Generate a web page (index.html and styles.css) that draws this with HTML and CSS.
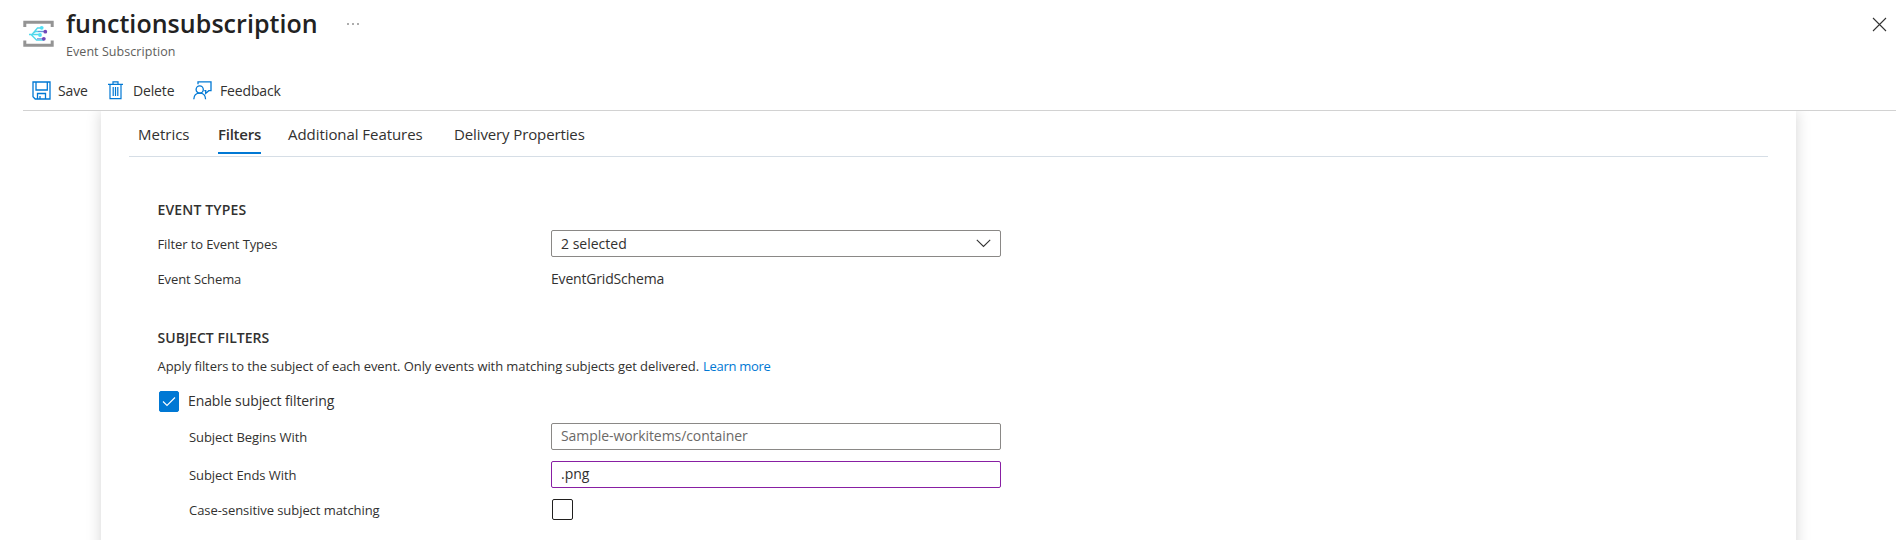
FILE: index.html
```html
<!DOCTYPE html>
<html lang="en">
<head>
<meta charset="utf-8">
<title>functionsubscription</title>
<link rel="stylesheet" href="styles.css">
</head>
<body>
<header class="header">
  <div class="title-row">
    <svg class="logo" width="31" height="28" viewBox="0 0 31 28" fill="none">
      <path d="M1.8 7V2.3H29.2V7M1.8 20.5V25.2H29.2V20.5" stroke="#949494" stroke-width="3"/>
      <path d="M6 14.5H9L14.5 8H18M8 14.5L13.5 20H21M9 14.5H16M9.5 13.5L13 11.5H21" stroke="#50d8ec" stroke-width="1.3"/>
      <path d="M15 11.5H21M14 18.7H20" stroke="#6f8fd8" stroke-width="1.1"/>
      <circle cx="18.7" cy="7.8" r="1.9" fill="#50e0f5"/><circle cx="17" cy="15" r="1.9" fill="#50e0f5"/>
      <circle cx="22.3" cy="11.7" r="1.9" fill="#7048b8"/><circle cx="20.8" cy="18.8" r="1.9" fill="#7048b8"/>
    </svg>
    <div class="titles">
      <h1 class="title">functionsubscription</h1>
      <div class="subtitle">Event Subscription</div>
    </div>
    <svg class="more" width="14" height="4" viewBox="0 0 14 4" fill="#444"><circle cx="2" cy="2" r=".8"/><circle cx="7" cy="2" r=".8"/><circle cx="12" cy="2" r=".8"/></svg>
    <svg class="close" width="15" height="15" viewBox="0 0 15 15" stroke="#333" stroke-width="1.1"><path d="M1 1L14 14M14 1L1 14"/></svg>
  </div>
  <div class="toolbar">
    <button class="command save"><svg width="19" height="19" viewBox="0 0 19 19" fill="none" stroke="#0078d4" stroke-width="1.3"><path d="M1 1H18V18H3.2L1 15.8ZM4 1V9H15.3V1M5.5 18V12.5H13.5V18M8 18V15"/></svg><span>Save</span></button>
    <button class="command delete"><svg width="15" height="19" viewBox="0 0 15 19" fill="none" stroke="#0078d4" stroke-width="1.2"><path d="M0 3.4H15M5 3.2V.8H10V3.2M2 3.4V17.6H13V3.4M5.2 6V15M7.5 6V15M9.8 6V15"/></svg><span>Delete</span></button>
    <button class="command feedback"><svg width="19" height="19" viewBox="0 0 19 19" fill="none" stroke="#0078d4" stroke-width="1.3"><circle cx="6.7" cy="8.5" r="3.6"/><path d="M.8 18.2C1 14.3 3.5 12.1 6.7 12.1S12.4 14.3 12.6 18.2M5 3.3V.8H18V9.7H15.8L12.7 12.4V9.7H11.3"/></svg><span>Feedback</span></button>
  </div>
</header>
<main class="content">
  <section class="panel">
    <nav class="tabs">
      <a class="tab metrics">Metrics</a>
      <a class="tab active">Filters</a>
      <a class="tab features">Additional Features</a>
      <a class="tab delivery">Delivery Properties</a>
    </nav>
    <div class="form">
      <h2 class="heading">EVENT TYPES</h2>
      <div class="row">
        <div class="label">Filter to Event Types</div>
        <div class="field select"><span>2 selected</span>
          <svg width="15" height="9" viewBox="0 0 15 9" fill="none" stroke="#333" stroke-width="1.1"><path d="M.8 .8L7.5 7.5L14.2 .8"/></svg></div>
      </div>
      <div class="row row-schema">
        <div class="label">Event Schema</div>
        <div class="value">EventGridSchema</div>
      </div>
      <h2 class="heading subject">SUBJECT FILTERS</h2>
      <p class="description"><span>Apply filters to the subject of each event. Only events with matching subjects get delivered.</span><a class="link">Learn more</a></p>
      <div class="enable">
        <span class="checkbox checked"><svg width="14" height="11" viewBox="0 0 14 11" fill="none" stroke="#fff" stroke-width="1.1"><path d="M1 5.5L5 9.5L13 1.5"/></svg></span>
        <span class="enable-text">Enable subject filtering</span>
      </div>
      <div class="row">
        <div class="label indented">Subject Begins With</div>
        <div class="field input"><span class="placeholder">Sample-workitems/container</span></div>
      </div>
      <div class="row row-ends">
        <div class="label indented">Subject Ends With</div>
        <div class="field input edited"><span>.png</span></div>
      </div>
      <div class="row row-case">
        <div class="label indented">Case-sensitive subject matching</div>
        <span class="checkbox"></span>
      </div>
    </div>
  </section>
</main>
</body>
</html>
```
FILE: styles.css
```css
* { box-sizing: border-box; }
body { margin: 0; height: 540px; overflow: hidden; background: #fff; color: #323130; font: 14px/20px "Open Sans", "Noto Sans", sans-serif; display: flex; flex-direction: column; }
h1, h2, p { margin: 0; font: inherit; }
span { white-space: nowrap; }
.header { flex: none; height: 111px; margin-left: 23px; border-bottom: 1px solid #d2d2d2; }
.title-row { display: flex; height: 72px; }
.logo { margin-top: 20px; }
.titles { margin-left: 12px; width: 252px; }
.title { font-size: 25px; font-weight: 600; line-height: 32px; padding-top: 7px; color: #222; white-space: nowrap; letter-spacing: .05px; }
.subtitle { font-size: 12.5px; line-height: 18px; margin-top: 4px; color: #605e5c; letter-spacing: .06px; }
.more { margin: 22px 0 0 28px; }
.close { margin: 17px 9px 0 auto; }
.toolbar { display: flex; height: 38px; padding: 0 0 0 9px; }
.command { display: flex; align-items: center; height: 37px; padding: 0; border: 0; background: none; color: #323130; font: inherit; letter-spacing: -.15px; }
.save { gap: 7px; width: 76px; }
.delete { gap: 10px; width: 85px; }
.feedback { gap: 8px; }
.content { flex: 1; overflow: hidden; padding: 0 100px 0 101px; }
.panel { height: 470px; padding: 0 28px; box-shadow: 0 0 14px rgba(0,0,0,.17); background: #fff; }
.tabs { display: flex; height: 46px; padding-left: 9px; border-bottom: 1px solid #d6dee6; font-size: 15px; }
.tab { height: 43px; padding-top: 13px; white-space: nowrap; }
.metrics { width: 80px; }
.active { width: 43px; margin-right: 27px; font-weight: 600; letter-spacing: -.25px; border-bottom: 2px solid #0078d4; }
.features { width: 166px; letter-spacing: -.06px; }
.delivery { letter-spacing: -.12px; }
.form { padding: 42px 0 0 28px; }
.heading { height: 31px; font-weight: 600; line-height: 22px; white-space: nowrap; padding-left: .5px; letter-spacing: .15px; }
.row { display: flex; align-items: center; height: 27px; }
.label { width: 394px; font-size: 13px; padding-left: .5px; letter-spacing: -.1px; }
.indented { padding-left: 32px; letter-spacing: -.06px; }
.field { display: flex; align-items: center; width: 450px; height: 27px; padding: 0 9px; border: 1px solid #8a8886; border-radius: 2px; }
.input { padding-bottom: 2px; }
.select { justify-content: space-between; }
.row-schema { margin: 8px 0 35px; }
.value { letter-spacing: -.18px; }
.subject { height: 29px; letter-spacing: .02px; }
.description { display: flex; font-size: 13px; white-space: nowrap; padding-left: .5px; letter-spacing: -.07px; }
.link { color: #0078d4; margin-left: 4px; letter-spacing: -.3px; }
.enable { display: flex; align-items: center; height: 21px; margin: 15px 0 11px 2px; gap: 9px; }
.enable-text { letter-spacing: -.09px; padding-bottom: 2px; }
.checkbox { width: 21px; height: 21px; border: 1px solid #201f1e; border-radius: 2px; }
.checked { display: flex; align-items: center; justify-content: center; width: 20px; background: #0078d4; border-color: #0078d4; }
.placeholder { color: #6b6967; letter-spacing: -.07px; }
.row-ends { margin-top: 11px; }
.edited { border-color: #881fa3; }
.row-case { margin-top: 8px; }
.row-case .checkbox { margin-left: 1px; }
```
